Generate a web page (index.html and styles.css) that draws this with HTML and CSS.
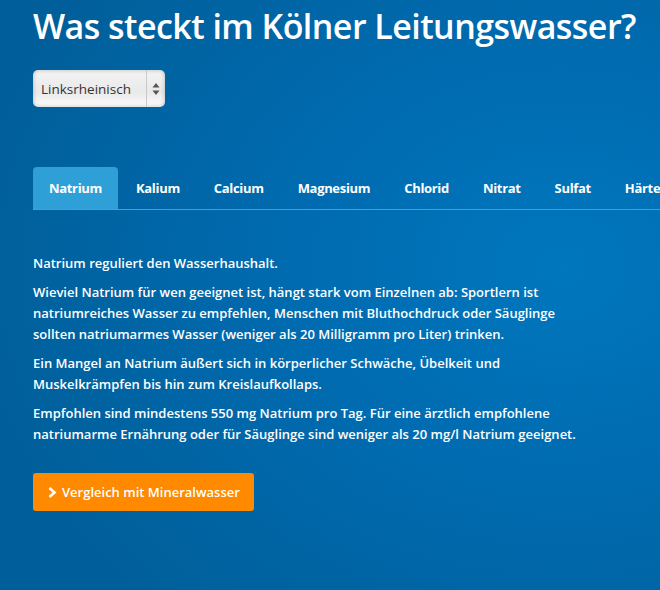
FILE: index.html
```html
<!DOCTYPE html>
<html lang="de">
<head>
<meta charset="utf-8">
<title>Was steckt im Kölner Leitungswasser?</title>
<link rel="stylesheet" href="styles.css">
</head>
<body>
<div class="page">
  <h1 class="title">Was steckt im Kölner Leitungswasser?</h1>
  <div class="select">
    <span class="select-label">Linksrheinisch</span>
    <span class="select-arrows">
      <svg width="8" height="14" viewBox="0 0 8 14"><path d="M4 1 L7.5 5.5 H0.5 Z M4 13 L7.5 8.5 H0.5 Z" fill="#555"/></svg>
    </span>
  </div>
  <ul class="tabs">
    <li class="tab active">Natrium</li>
    <li class="tab">Kalium</li>
    <li class="tab">Calcium</li>
    <li class="tab">Magnesium</li>
    <li class="tab">Chlorid</li>
    <li class="tab">Nitrat</li>
    <li class="tab">Sulfat</li>
    <li class="tab">Härte</li>
  </ul>
  <div class="content">
    <p>Natrium reguliert den Wasserhaushalt.</p>
    <p>Wieviel Natrium für wen geeignet ist, hängt stark vom Einzelnen ab: Sportlern ist natriumreiches Wasser zu empfehlen, Menschen mit Bluthochdruck oder Säuglinge sollten natriumarmes Wasser (weniger als 20 Milligramm pro Liter) trinken.</p>
    <p>Ein Mangel an Natrium äußert sich in körperlicher Schwäche, Übelkeit und Muskelkrämpfen bis hin zum Kreislaufkollaps.</p>
    <p>Empfohlen sind mindestens 550 mg Natrium pro Tag. Für eine ärztlich empfohlene natriumarme Ernährung oder für Säuglinge sind weniger als 20 mg/l Natrium geeignet.</p>
  </div>
  <a class="btn" href="#">
    <svg class="btn-icon" width="9" height="11" viewBox="0 0 9 11"><path d="M1.5 1 L6.5 5.5 L1.5 10" fill="none" stroke="#fff" stroke-width="2.6"/></svg>
    Vergleich mit Mineralwasser
  </a>
</div>
</body>
</html>
```
FILE: styles.css
```css
html, body {
  margin: 0;
  padding: 0;
  height: 100%;
}
body {
  background: radial-gradient(ellipse 90% 80% at 85% 45%, #0077be 0%, #006bb0 45%, #005f9a 100%);
  color: #fff;
  font-family: "Open Sans", "DejaVu Sans", sans-serif;
  overflow: hidden;
}
.page {
  padding: 0 0 0 33px;
}
.title {
  margin: 0;
  padding-top: 2px;
  font-size: 34px;
  font-weight: 600;
  line-height: 48px;
  letter-spacing: -0.55px;
  white-space: nowrap;
}
.select {
  margin-top: 20px;
  width: 132px;
  height: 37px;
  box-sizing: border-box;
  border-radius: 5px;
  background: linear-gradient(#f4f4f4, #e9e9e9 60%, #fdfdfd);
  box-shadow: inset 0 0 4px rgba(0,0,0,0.25);
  display: flex;
  align-items: stretch;
  color: #333;
}
.select-label {
  flex: 1;
  display: flex;
  align-items: center;
  padding-left: 8px;
  font-size: 13.5px;
  font-weight: 400;
}
.select-arrows {
  width: 18px;
  border-left: 1px solid #c9c9c9;
  display: flex;
  align-items: center;
  justify-content: center;
}
.tabs {
  list-style: none;
  margin: 60px 0 0 0;
  padding: 0;
  display: flex;
  gap: 2px;
  border-bottom: 1px solid #3aa3dc;
  white-space: nowrap;
  overflow: hidden;
}
.tab {
  flex: none;
  padding: 0 16px;
  height: 42px;
  line-height: 42px;
  font-size: 13px;
  font-weight: 700;
  letter-spacing: -0.32px;
  border-radius: 4px 4px 0 0;
}
.tab.active {
  background: #2f9fd7;
}
.content {
  margin-top: 43px;
  width: 560px;
  font-size: 13px;
  font-weight: 600;
  line-height: 21px;
}
.content p {
  margin: 0 0 8px 0;
}
.btn {
  margin-top: 20px;
  display: inline-flex;
  align-items: center;
  gap: 5px;
  height: 38px;
  padding: 0 14px 0 15px;
  background: #ff8a00;
  border-radius: 3px;
  color: #fff;
  text-decoration: none;
  font-size: 13px;
  font-weight: 600;
}
```
